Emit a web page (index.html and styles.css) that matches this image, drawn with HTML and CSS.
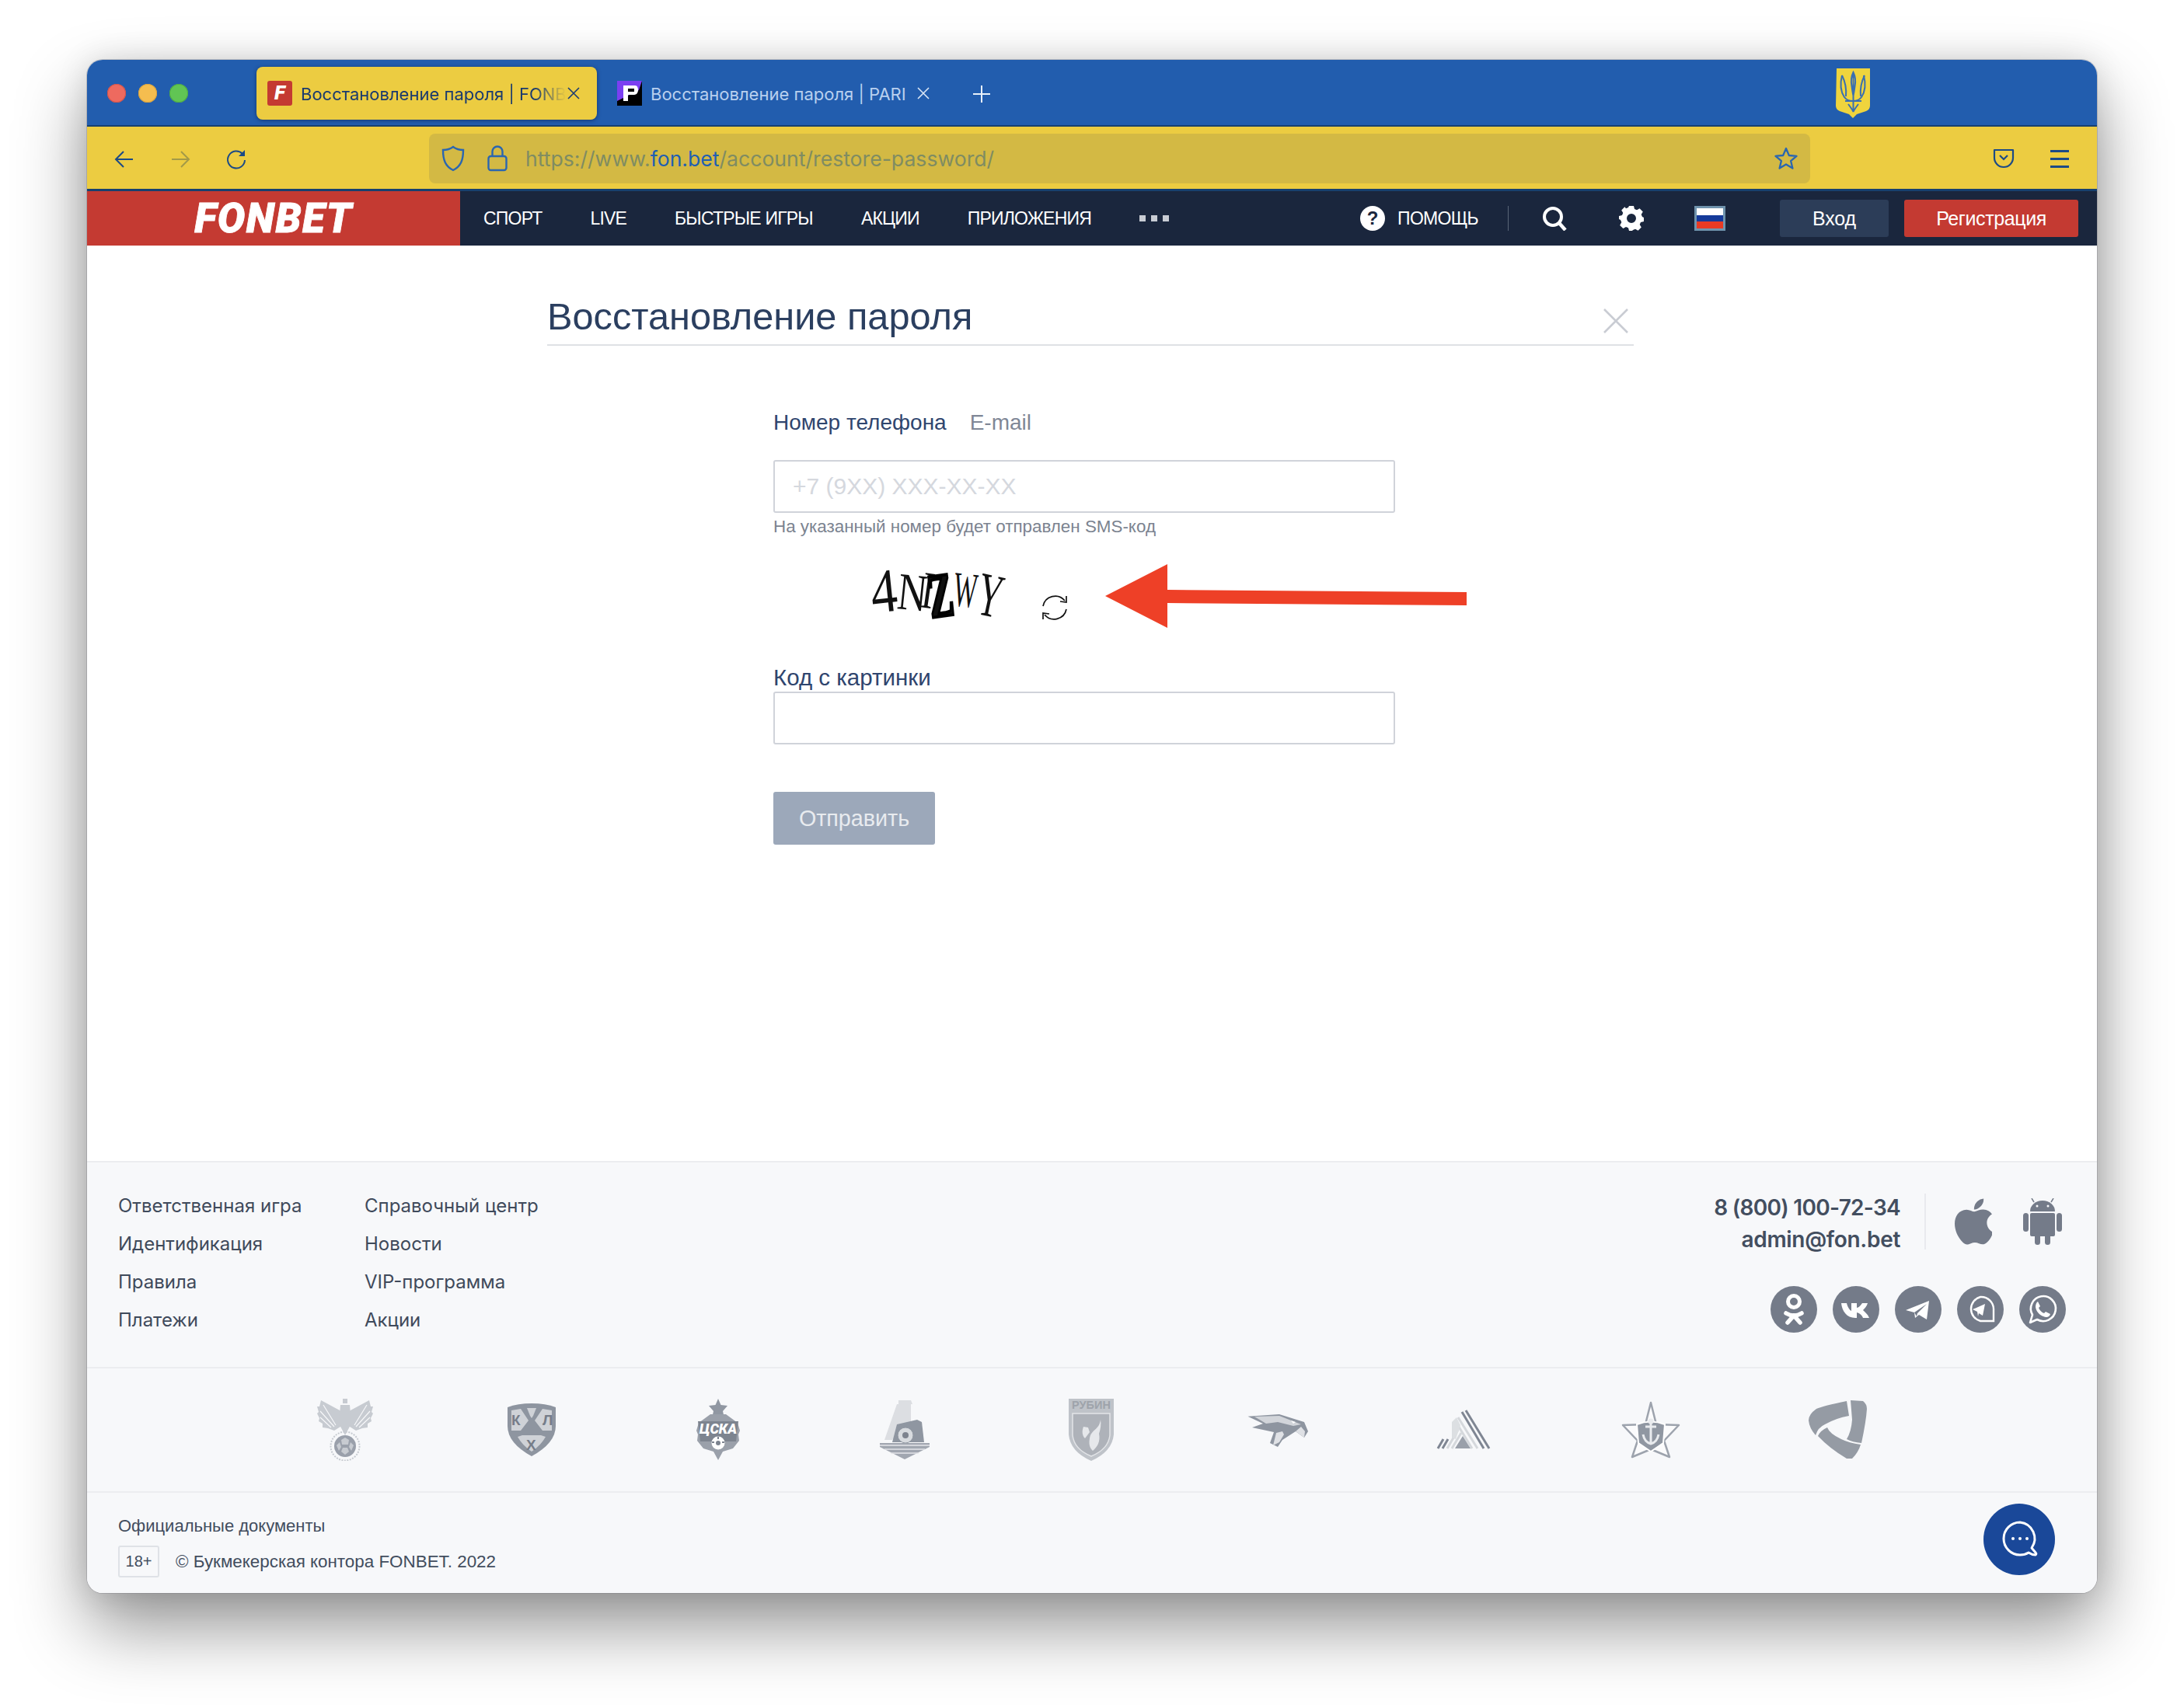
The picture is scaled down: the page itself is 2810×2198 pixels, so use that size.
FILE: index.html
```html
<!DOCTYPE html>
<html lang="ru">
<head>
<meta charset="utf-8">
<title>Восстановление пароля | FONBET</title>
<link rel="stylesheet" href="styles.css">
</head>
<body>
<div class="window">
  <header class="titlebar">
    <div class="lights"><span class="light red"></span><span class="light amber"></span><span class="light green"></span></div>
    <div class="tab active">
      <svg class="favicon" viewBox="0 0 32 32"><rect width="32" height="32" rx="3" fill="#c43a32"/><text x="16" y="24" text-anchor="middle" class="fav-f">F</text></svg>
      <span class="tab-title fade">Восстановление пароля | FONBET</span>
      <svg class="tab-x" viewBox="0 0 16 16"><path d="M1 1l14 14M15 1L1 15" stroke="#1b3c72" stroke-width="1.6" fill="none"/></svg>
    </div>
    <div class="tab plain">
      <svg class="favicon" viewBox="0 0 32 32"><rect width="32" height="32" fill="#000"/><path d="M0 0h32L28 12 0 26z" fill="#7b3ff2"/><path d="M8 6h15c3 0 4 3 4 6s-2 6-5 6h-8v8H8z" fill="#fff"/><rect x="14" y="10" width="8" height="4" fill="#000"/></svg>
      <span class="tab-title">Восстановление пароля | PARI</span>
      <svg class="tab-x" viewBox="0 0 16 16"><path d="M1 1l14 14M15 1L1 15" stroke="#dbe6f5" stroke-width="1.6" fill="none"/></svg>
    </div>
    <svg class="plus" viewBox="0 0 24 24"><path d="M12 1v22M1 12h22" stroke="#e8f0fa" stroke-width="2" fill="none"/></svg>
    <svg class="trident" viewBox="0 0 45 66">
      <path d="M1 1h43v48q0 5-5 7l-12 4-5 5-5-5-12-4q-5-2-5-7z" fill="#efd43d"/>
      <g fill="none" stroke="#3a6fb0" stroke-width="2">
        <path d="M22.5 6v36M22.5 6q-4 8-2 18 1 8 2 12 1-4 2-12 2-10-2-18z"/>
        <path d="M8 10c-3 12-1 22 3 28 3 4 7 5 11 5s8-1 11-5c4-6 6-16 3-28"/>
        <path d="M8 10c4 8 6 16 5 27M37 10c-4 8-6 16-5 27"/>
        <path d="M12 43h21M22.5 43v14M16 47q6 8 6.500 10 .5-2 6.500-10"/>
      </g>
    </svg>
  </header>

  <div class="toolbar">
    <svg class="tb-icon back" viewBox="0 0 28 28"><path d="M25 14H4M13 4L3 14l10 10" stroke="#1c4a86" stroke-width="2" fill="none"/></svg>
    <svg class="tb-icon forward" viewBox="0 0 28 28"><path d="M3 14h21M15 4l10 10-10 10" stroke="#a39a48" stroke-width="2" fill="none"/></svg>
    <svg class="tb-icon reload" viewBox="0 0 28 28"><path d="M22 7A11 11 0 1 0 25 15" stroke="#1c4a86" stroke-width="2" fill="none"/><path d="M25 2v8h-8z" fill="#1c4a86"/></svg>
    <div class="addressbar">
      <svg class="shield" viewBox="0 0 30 34"><path d="M15 2c4 3 8 4 13 4 0 13-3 21-13 26C5 27 2 19 2 6c5 0 9-1 13-4z" stroke="#2a66b0" stroke-width="2.400" fill="none"/></svg>
      <svg class="lock" viewBox="0 0 26 34"><rect x="1.500" y="14" width="23" height="18" rx="3" stroke="#2a66b0" stroke-width="2.400" fill="none"/><path d="M6.500 14V8a6.500 6.500 0 0 1 13 0v6" stroke="#2a66b0" stroke-width="2.400" fill="none"/></svg>
      <span class="url">https://www.<b class="host">fon.bet</b>/account/restore-password/</span>
      <svg class="star" viewBox="0 0 32 32"><path d="M16 3l3.800 9 9.700.8-7.400 6.300 2.300 9.500L16 23.500l-8.400 5.100 2.300-9.500-7.400-6.300 9.700-.8z" stroke="#2a66b0" stroke-width="2.300" fill="none" stroke-linejoin="round"/></svg>
    </div>
    <svg class="pocket" viewBox="0 0 28 28"><path d="M2 4h24v10a12 12 0 0 1-24 0z" stroke="#1c4a86" stroke-width="2.200" fill="none" stroke-linejoin="round"/><path d="M9 11l5 5 5-5" stroke="#1c4a86" stroke-width="2.200" fill="none"/></svg>
    <div class="burger"><span></span><span></span><span></span></div>
  </div>

  <nav class="sitenav">
    <div class="brand">FONBET</div>
    <ul class="menu">
      <li>СПОРТ</li><li>LIVE</li><li>БЫСТРЫЕ ИГРЫ</li><li>АКЦИИ</li><li>ПРИЛОЖЕНИЯ</li>
      <li class="dots"><span></span><span></span><span></span></li>
    </ul>
    <div class="nav-right">
      <svg class="help-ic" viewBox="0 0 32 32"><circle cx="16" cy="16" r="16" fill="#fff"/><text x="16" y="24" text-anchor="middle" class="help-q">?</text></svg>
      <span class="help-t">ПОМОЩЬ</span>
      <i class="nav-sep"></i>
      <svg class="search-ic" viewBox="0 0 32 32"><circle cx="14" cy="14" r="11" stroke="#fff" stroke-width="4" fill="none"/><path d="M22 22l8 9" stroke="#fff" stroke-width="4.500"/></svg>
      <svg class="gear-ic" viewBox="0 0 32 32"><path fill="#fff" fill-rule="evenodd" d="M13 0h6l1 4 3 1.300 3.600-2.100 4.200 4.200L28.700 11 30 14l2 1v5l-4 1-1.300 3 2.100 3.600-4.200 4.200-3.600-2.100-3 1.300L17 32h-4l-1-3.700-3-1.300-3.600 2.100-4.200-4.200L3.300 21 2 18l-2-1v-4l4-1 1.300-3-2.100-3.600 4.200-4.200L9 3.300 12 2zM16 10a6 6 0 1 0 0 12 6 6 0 0 0 0-12z"/></svg>
      <div class="flag"><i class="fw"></i><i class="fb"></i><i class="fr"></i></div>
      <button class="btn-login">Вход</button>
      <button class="btn-reg">Регистрация</button>
    </div>
  </nav>

  <main class="content">
    <div class="page-head">
      <h1>Восстановление пароля</h1>
      <svg class="close-x" viewBox="0 0 32 32"><path d="M1 1l30 30M31 1L1 31" stroke="#c9ccd3" stroke-width="2.600" fill="none"/></svg>
    </div>
    <form class="form">
      <div class="switch"><span class="sw-on">Номер телефона</span><span class="sw-off">E-mail</span></div>
      <div class="field"><span class="placeholder">+7 (9XX) XXX-XX-XX</span></div>
      <p class="hint">На указанный номер будет отправлен SMS-код</p>
      <div class="captcha-row">
        <svg class="captcha" viewBox="0 0 165 60">
          <text class="cap" transform="translate(0 50) rotate(-6) scale(1.700 2)">4</text>
          <text class="cap" transform="translate(30 44) rotate(6) scale(1.300 1.700)">N</text>
          <text class="cap" transform="translate(60 42) rotate(8) scale(1.200 1.700)">I</text>
          <text class="cap heavy" transform="translate(75 56) rotate(-8) scale(1.200 2)">Z</text>
          <text class="cap" transform="translate(102 40) rotate(6) scale(.8 1.600)">W</text>
          <text class="cap" transform="translate(130 50) rotate(12) scale(1.100 2)">Y</text>
        </svg>
        <svg class="refresh" viewBox="0 0 38 38"><path d="M32 10A16 16 0 0 0 4 17M6 28A16 16 0 0 0 34 21" stroke="#111" stroke-width="1.700" fill="none"/><path d="M26 11l8 1 0-8M12 27l-8-1 0 8" stroke="#111" stroke-width="1.700" fill="none"/></svg>
        <svg class="arrow" viewBox="0 0 465 82"><path d="M0 41L80 0V33L465 36V53L80 50V82z" fill="#ee4027"/></svg>
      </div>
      <label class="code-label">Код с картинки</label>
      <div class="field"></div>
      <button class="submit" type="button">Отправить</button>
    </form>
  </main>

  <footer class="footer">
    <div class="foot-top">
      <ul class="foot-col c1"><li>Ответственная игра</li><li>Идентификация</li><li>Правила</li><li>Платежи</li></ul>
      <ul class="foot-col c2"><li>Справочный центр</li><li>Новости</li><li>VIP-программа</li><li>Акции</li></ul>
      <div class="foot-right">
        <div class="contact-row">
          <div class="contacts"><div class="phone">8 (800) 100-72-34</div><div class="email">admin@fon.bet</div></div>
          <i class="contact-sep"></i>
          <svg class="os-ic" viewBox="3.800 3 15.300 18"><path fill="#747b89" d="M17.050 20.280c-.98.950-2.050.8-3.080.35-1.090-.46-2.090-.48-3.240 0-1.440.62-2.200.44-3.060-.35C2.790 15.250 3.510 7.590 9.050 7.310c1.350.07 2.290.74 3.080.8 1.180-.24 2.310-.93 3.570-.84 1.510.12 2.650.72 3.400 1.800-3.120 1.870-2.380 5.980.48 7.130-.57 1.500-1.310 2.990-2.540 4.090zM12.030 7.250c-.15-2.230 1.660-4.070 3.740-4.250.29 2.580-2.340 4.500-3.740 4.250z"/></svg>
          <svg class="os-ic" viewBox="0 0 50 60"><g fill="#747b89"><path d="M9 17a16 14 0 0 1 32 0z"/><rect x="9" y="19" width="32" height="30" rx="2"/><rect x="0" y="19" width="7" height="24" rx="3.500"/><rect x="43" y="19" width="7" height="24" rx="3.500"/><rect x="15" y="44" width="7" height="16" rx="3.500"/><rect x="28" y="44" width="7" height="16" rx="3.500"/></g><path d="M14 5l-3-5M36 5l3-5" stroke="#747b89" stroke-width="1.500"/><circle cx="18" cy="10" r="1.500" fill="#f7f8fa"/><circle cx="32" cy="10" r="1.500" fill="#f7f8fa"/></svg>
        </div>
        <div class="socials">
          <svg class="soc" viewBox="0 0 60 60"><circle cx="30" cy="30" r="30" fill="#747b89"/><circle cx="30" cy="20" r="7.500" stroke="#fff" stroke-width="5" fill="none"/><path d="M20 35q10 6 20 0M30 38l-8 9M30 38l8 9" stroke="#fff" stroke-width="5.500" fill="none" stroke-linecap="round"/></svg>
          <svg class="soc" viewBox="0 0 60 60"><circle cx="30" cy="30" r="30" fill="#747b89"/><path d="M11 22h7c1 5 4 9 6 10v-10h7v6c2 0 5-3 7-6h7c-1 4-4 7-6 9 2 2 6 5 8 10h-8c-1-3-4-6-8-7v7h-2C18 41 12 32 11 22z" fill="#fff"/></svg>
          <svg class="soc" viewBox="0 0 60 60"><circle cx="30" cy="30" r="30" fill="#747b89"/><path d="M14 31L44 19 41 43 31 37 26 41 25 34z" fill="#fff"/><path d="M25 34L41 23 29 35 28 39z" fill="#747b89"/></svg>
          <svg class="soc" viewBox="0 0 60 60"><circle cx="30" cy="30" r="30" fill="#747b89"/><path d="M30 14a16 16 0 0 1 17 17v14H30a16 16 0 0 1 0-31z" stroke="#fff" stroke-width="2.400" fill="none"/><path d="M20 30l16-7-3 15-5-3-1 4-1-6z" fill="#fff"/></svg>
          <svg class="soc" viewBox="0 0 60 60"><circle cx="30" cy="30" r="30" fill="#747b89"/><path d="M14 47l3-10a16 16 0 1 1 6 6z" stroke="#fff" stroke-width="2.600" fill="none" stroke-linejoin="round"/><path d="M24 20l3 6-2 2c1 3 4 6 7 7l2-2 6 3c-1 4-5 5-9 3-5-2-9-6-10-12 0-3 1-6 3-7z" fill="#fff"/></svg>
        </div>
      </div>
    </div>
    <div class="foot-logos">
      <svg class="club" viewBox="0 0 80 80">
        <g fill="#c7cbd1"><path d="M35 16L9 2 7 10 4 10 6 17 4 19 7 25 6 29 11 32 11 37 18 38 26 41 34 36zM45 16L71 2 73 10 76 10 74 17 76 19 73 25 74 29 69 32 69 37 62 38 54 41 46 36z"/><path d="M34 8h12l2 24-8 15-8-15z"/><path d="M37 0h6v6h-6z"/></g>
        <path d="M12 8l16 26M8 16l18 20M8 24l14 13M68 8L52 34M72 16L54 36M72 24L58 37" stroke="#f7f8fa" stroke-width="1.200"/>
        <circle cx="40" cy="61" r="14" fill="#9aa0ab"/><circle cx="40" cy="61" r="18.500" stroke="#c7cbd1" stroke-width="2" stroke-dasharray="2 1.500" fill="none"/>
        <path d="M35 53l5-3 5 3-1 6h-8zM29 60l4-4 2 6-3 5zM51 60l-4-4-2 6 3 5zM35 68l2-5h6l2 5-5 4z" fill="#c7cbd1"/>
      </svg>
      <svg class="club" viewBox="0 0 80 80">
        <path d="M40 6q18 0 31 5v24q0 22-31 39Q9 57 9 35V11q13-5 31-5z" fill="#8e95a0"/>
        <path d="M14 15l12-2 10 15-10 13-12 0zM66 15l-12-2-10 15 10 13 12 0zM28 47h24l6 2q-6 11-18 19-12-8-18-19z" fill="#cfd2d7"/>
        <path d="M34 12h12l-4 10-2 3-2-3z" fill="#cfd2d7"/>
        <text x="14" y="34" class="khl">К</text><text x="54" y="34" class="khl">Л</text><text x="33" y="66" class="khl">Х</text>
      </svg>
      <svg class="club" viewBox="0 0 80 80">
        <path d="M40 0l3.500 8 8.500 1-6 7 2 9H32l2-9-6-7 8.500-1z" fill="#9097a2"/>
        <path d="M30 20h20l15 11 3 10-2 5 1 8-8 10-13 4-6 11-6-11-13-4-8-10 1-8-2-5 3-10z" fill="#9aa0aa"/>
        <path d="M14 29h52l-3 26H17z" fill="#7d848f"/>
        <text x="40" y="45" text-anchor="middle" class="cska">ЦСКА</text>
        <circle cx="40" cy="57" r="8.500" fill="#fff"/><circle cx="40" cy="57" r="3" fill="#7c838f"/><path d="M40 49v3M32 56l3 0M48 56l-3 0" stroke="#7c838f" stroke-width="2"/>
      </svg>
      <svg class="club" viewBox="0 0 80 80">
        <path d="M32 2h16l2 5-2 0v26l-24 20H14L30 7l2 0z" fill="#dcdee2"/>
        <path d="M30 33l26-6 6 3 3 26H24z" fill="#8f96a1"/>
        <circle cx="41" cy="47" r="10" fill="#d8dbdf" stroke="#8f96a1" stroke-width="1"/><circle cx="41" cy="47" r="4" fill="#7d838e"/>
        <path d="M8 57h64v5L44 76l-4 2-4-2L8 62z" fill="#a1a6b0"/><path d="M8 60h64M14 65h52M22 70h36" stroke="#e3e5e9" stroke-width="1.300"/>
      </svg>
      <svg class="club" viewBox="0 0 80 80">
        <path d="M11 0h58v46q-2 22-29 34Q13 68 11 46z" fill="#bfc3c9"/>
        <text x="40" y="13" text-anchor="middle" class="rubin">РУБИН</text>
        <path d="M16 19h48v28q-2 18-24 27-22-9-24-27z" fill="#aeb2b9" stroke="#e3e5e8" stroke-width="1.500"/>
        <path d="M52 27c-2 14-12 12-14 24-2 10 2 14 4 16 6-5 10-12 8-22 2-6 3-12 2-18zM30 36l6 1 2 6-6 8c-4-4-4-10-2-15z" fill="#e6e8eb"/>
      </svg>
      <svg class="club" viewBox="0 0 80 80">
        <path d="M1.500 22.700L42 20 74 30 79 42 74 50 63 42 46 53 40 62 30 57 35 43 7 37 21 32z" fill="#8e95a0"/>
        <path d="M10 23L42 22 70 33 60 35 40 30 25 32z" fill="#d2d5da"/>
        <path d="M63 42l7-6 5 6-1 8zM38 44l8-2 2 4-6 10-8 4z" fill="#dfe1e5"/>
        <path d="M57 28l6 2-3 2z" fill="#fff"/>
      </svg>
      <svg class="club" viewBox="0 0 80 80">
        <g fill="none" stroke-width="3"><path d="M28 28L50 64M32 24L57 64" stroke="#d5d8dc"/><path d="M37 17L65 64M42 15L72 64" stroke="#7f8693"/><path d="M6 64L13 52M12 64L19 52" stroke="#7f8693"/><path d="M18 64L32 40M24 64L36 44" stroke="#d5d8dc"/></g>
        <path d="M38 48l10 16H28z" fill="#9aa0aa"/><path d="M24 30l6-6 5 10-6 18-5-2z" fill="#dcdfe2"/>
      </svg>
      <svg class="club" viewBox="0 0 80 80">
        <path d="M40 5l7 28 29 1-19 20 7 21-24-10-24 10 7-21L4 34l29-1z" fill="#fbfbfc" stroke="#9da3ad" stroke-width="2.500" stroke-linejoin="round"/>
        <path d="M22 33q18-7 36 0l-2 24-16 11-16-11z" fill="#9097a2" stroke="#fff" stroke-width="2"/>
        <path d="M40 28v30M33 36h14M30 46q2 10 10 12 8-2 10-12" stroke="#e9ebee" stroke-width="3" fill="none"/>
        <circle cx="40" cy="29" r="3.500" fill="#e9ebee"/>
      </svg>
      <svg class="club" viewBox="0 0 80 80">
        <path fill="#959ba4" d="M52 3Q22 9 13 13 3 20 3 28q1 10 9 19 3-10 12-14 14-8 31-11zM57 2l16 1q5 4 5 10-1 16-7 44-12-1-19-5 6-10 7-25zM15 48q3-7 12-11 3 8 18 15 10 5 25 7-3 10-11 18h-7Q30 64 15 48z"/>
      </svg>
    </div>
    <div class="foot-bottom">
      <div class="legal">
        <div class="docs">Официальные документы</div>
        <div class="copy"><span class="age">18+</span><span>© Букмекерская контора FONBET. 2022</span></div>
      </div>
      <button class="chat" aria-label="Чат"><svg viewBox="0 0 50 50"><path d="M24 3a21 21 0 1 0 0 42c5 0 8-1 11-3 3 2 6 3 9 3 1-1 1-2 0-3l-5-6a21 21 0 0 0-15-33z" stroke="#fff" stroke-width="3" fill="none" stroke-linejoin="round"/><circle cx="15" cy="24" r="2" fill="#fff"/><circle cx="24" cy="24" r="2" fill="#fff"/><circle cx="33" cy="24" r="2" fill="#fff"/></svg></button>
    </div>
  </footer>
</div>
</body>
</html>
```
FILE: styles.css
```css
* { box-sizing: border-box; }
html, body { margin: 0; padding: 0; background: #fff; }
body { width: 2810px; height: 2198px; padding: 77px 112px 148px; overflow: hidden; font-family: "Liberation Sans", Arial, sans-serif; }
ul { list-style: none; margin: 0; padding: 0; }
button { border: 0; font-family: inherit; padding: 0; }

.window { width: 2586px; height: 1973px; border-radius: 20px; overflow: hidden; display: flex; flex-direction: column; background: #fff; box-shadow: 0 0 0 1px rgba(120,120,130,.35), 0 44px 90px rgba(0,0,0,.42), 0 0 40px rgba(0,0,0,.12); }

/* title bar */
.titlebar { height: 86px; flex: none; background: #225dae; border-bottom: 2px solid #17406f; display: flex; align-items: flex-start; position: relative; }
.lights { display: flex; gap: 16px; padding: 31px 0 0 26px; width: 218px; flex: none; }
.light { width: 24px; height: 24px; border-radius: 50%; display: block; }
.red { background: #ee6a5f; box-shadow: inset 0 0 0 1px #d3534a; }
.amber { background: #f5bd4f; box-shadow: inset 0 0 0 1px #d9a23e; }
.green { background: #61c554; box-shadow: inset 0 0 0 1px #4ea944; }
.tab { height: 68px; margin-top: 9px; display: flex; align-items: center; flex: none; font-family: Inter, "Liberation Sans", sans-serif; font-size: 22px; }
.tab.active { width: 438px; background: #eccc41; border-radius: 8px; padding-left: 14px; color: #1a3a6e; box-shadow: 0 1px 5px rgba(10,30,70,.6); }
.tab.plain { width: 430px; padding-left: 26px; color: #b9d0ef; }
.favicon { width: 32px; height: 32px; flex: none; margin-right: 11px; }
.fav-f { font: italic 900 26px Roboto, sans-serif; fill: #fff; }
.tab-title { white-space: nowrap; overflow: hidden; padding-top: 2px; }
.tab.active .tab-title { width: 341px; }
.fade { -webkit-mask-image: linear-gradient(to right, #000 88%, transparent 100%); mask-image: linear-gradient(to right, #000 88%, transparent 100%); }
.tab-x { width: 16px; height: 16px; flex: none; margin-left: 2px; }
.tab.plain .tab-x { margin-left: 14px; }
.plus { width: 24px; height: 24px; flex: none; position: absolute; left: 1139px; top: 32px; }
.trident { position: absolute; left: 2250px; top: 10px; width: 45px; height: 66px; }

/* toolbar */
.toolbar { height: 83px; flex: none; background: #eccc41; border-bottom: 3px solid #17406f; display: flex; align-items: flex-start; }
.tb-icon { width: 28px; height: 28px; flex: none; margin-top: 28px; }
.back { margin-left: 34px; }
.forward { margin-left: 44px; }
.reload { margin-left: 44px; }
.addressbar { width: 1777px; height: 64px; margin: 9px 0 0 234px; flex: none; background: #d3b944; border-radius: 8px; display: flex; align-items: center; padding-left: 16px; }
.shield { width: 30px; height: 34px; flex: none; }
.lock { width: 26px; height: 34px; flex: none; margin-left: 29px; }
.url { font-family: Inter, "Liberation Sans", sans-serif; font-size: 26.600px; color: #7f8c62; margin-left: 23px; white-space: nowrap; }
.host { font-weight: 400; color: #1f5fb2; }
.star { width: 32px; height: 32px; flex: none; margin-left: auto; margin-right: 15px; }
.pocket { width: 28px; height: 28px; flex: none; margin: 26px 0 0 235px; }
.burger { width: 24px; margin: 30px 0 0 46px; display: flex; flex-direction: column; gap: 7px; flex: none; }
.burger span { height: 3px; background: #1c4a86; display: block; }

/* site nav */
.sitenav { height: 70px; flex: none; background: #1a263d; display: flex; align-items: center; color: #fff; }
.brand { width: 480px; height: 70px; background: #c43a32; flex: none; display: flex; align-items: center; justify-content: center; font: italic 900 53px Roboto, sans-serif; color: #fff; letter-spacing: 1.500px; -webkit-text-stroke: .8px #fff; }
.menu { display: flex; align-items: center; gap: 62px; padding-left: 30px; font-size: 23px; letter-spacing: -.8px; white-space: nowrap; }
.dots { display: flex; gap: 7px; }
.dots span { width: 8px; height: 8px; background: #c8ccd4; display: block; }
.nav-right { margin-left: auto; display: flex; align-items: center; padding-right: 24px; }
.help-ic { width: 32px; height: 32px; }
.help-q { font: 700 24px "Liberation Sans", sans-serif; fill: #1a263d; }
.help-t { font-size: 23px; letter-spacing: -.7px; margin-left: 16px; }
.nav-sep { width: 1px; height: 32px; background: #5a6578; margin: 0 0 0 38px; display: block; }
.search-ic { width: 32px; height: 32px; margin-left: 43px; }
.gear-ic { width: 32px; height: 32px; margin-left: 67px; }
.flag { width: 40px; height: 32px; margin-left: 65px; border: 3px solid #6f93ad; display: flex; flex-direction: column; }
.flag i { flex: 1; display: block; }
.fw { background: #fff; } .fb { background: #153a9a; } .fr { background: #e93a24; }
.btn-login { width: 140px; height: 48px; margin-left: 70px; background: #2c3d58; border-radius: 3px; color: #fff; font-size: 25px; letter-spacing: -.2px; }
.btn-reg { width: 224px; height: 48px; margin-left: 20px; background: #c43a32; border-radius: 3px; color: #fff; font-size: 25px; letter-spacing: -.4px; }

/* content */
.content { flex: 1; background: #fff; padding-left: 592px; }
.page-head { width: 1398px; height: 129px; border-bottom: 2px solid #dfe1e5; display: flex; justify-content: space-between; align-items: flex-end; padding-bottom: 8px; }
.page-head h1 { margin: 0; font-size: 48.700px; font-weight: 400; color: #2b3f60; line-height: 56px; }
.close-x { width: 32px; height: 32px; margin: 0 7px 6px 0; }
.form { width: 800px; margin-left: 291px; padding-top: 79px; position: relative; }
.switch { display: flex; gap: 30px; font-size: 28px; line-height: 40px; height: 40px; }
.sw-on { color: #2f456e; }
.sw-off { color: #7f8796; }
.field { width: 800px; height: 68px; border: 2px solid #d0d3da; border-radius: 3px; display: flex; align-items: center; padding-left: 23px; }
.switch + .field { margin-top: 28px; }
.placeholder { font-size: 30px; color: #d5d8de; }
.hint { margin: 1px 0 2px; font-size: 22.400px; line-height: 34px; color: #7b8390; }
.captcha-row { height: 155px; display: flex; position: relative; align-items: flex-start; }
.captcha { width: 165px; height: 60px; margin: 42px 0 0 128px; flex: none; overflow: visible; }
.cap { font: 400 40px "Liberation Serif", serif; fill: #111; }
.heavy { font-weight: 700; stroke: #000; stroke-width: 2px; }
.refresh { width: 38px; height: 38px; flex: none; margin: 66px 0 0 50px; }
.arrow { position: absolute; left: 427px; top: 29px; width: 465px; height: 82px; }
.code-label { display: block; font-size: 29.500px; line-height: 40px; height: 38px; color: #2f456e; }
.submit { display: block; width: 208px; height: 68px; margin-top: 61px; background: #9ca8ba; border-radius: 3px; color: #e8ebef; font-size: 28.700px; }

/* footer */
.footer { height: 556px; flex: none; background: #f7f8fa; border-top: 2px solid #ecedf0; display: flex; flex-direction: column; font-family: Inter, "Liberation Sans", sans-serif; }
.foot-top { height: 265px; flex: none; border-bottom: 2px solid #ecedf0; display: flex; padding: 31px 40px 0 40px; position: relative; }
.foot-col { font-size: 24px; line-height: 49px; color: #3f4a5b; }
.foot-col.c1 { width: 317px; }
.foot-right { margin-left: auto; display: flex; flex-direction: column; align-items: flex-end; }
.contact-row { display: flex; align-items: center; height: 72px; margin-top: 9px; padding-right: 5px; }
.contacts { font-size: 28px; font-weight: 600; line-height: 41px; color: #434e5f; text-align: right; padding-top: 6px; }
.phone { letter-spacing: -.7px; }
.email { letter-spacing: -.3px; }
.contact-sep { width: 2px; height: 72px; background: #e9eaee; margin: 0 35px 0 31px; display: block; }
.os-ic { width: 50px; height: 60px; flex: none; }
.os-ic + .os-ic { margin-left: 40px; }
.socials { display: flex; gap: 20px; margin-top: 47px; }
.soc { width: 60px; height: 60px; display: block; }
.foot-logos { height: 160px; flex: none; border-bottom: 2px solid #ecedf0; display: grid; grid-template-columns: repeat(9, 240px); padding-left: 212px; align-items: center; justify-items: center; }
.club { width: 80px; height: 80px; display: block; }
.khl { font: 700 19px "Liberation Sans", sans-serif; fill: #767d89; }
.cska { font: italic 900 18px Roboto, sans-serif; fill: #fff; }
.rubin { font: 700 14.500px "Liberation Sans", sans-serif; fill: #9ea3ab; }
.foot-bottom { flex: 1; display: flex; justify-content: space-between; padding: 0 54px 0 40px; font-family: "Liberation Sans", Arial, sans-serif; font-size: 22.400px; color: #424d5e; }
.docs { margin-top: 29px; line-height: 28px; font-size: 22px; }
.copy { display: flex; align-items: center; margin-top: 11px; gap: 21px; }
.age { width: 53px; height: 41px; border: 2px solid #dfe2e7; border-radius: 3px; display: flex; align-items: center; justify-content: center; font-size: 20px; }
.chat { width: 92px; height: 92px; border-radius: 50%; background: #1a4899; margin-top: 14px; display: flex; align-items: center; justify-content: center; padding: 0 0 0 3px; flex: none; }
.chat svg { width: 50px; height: 50px; }
```
